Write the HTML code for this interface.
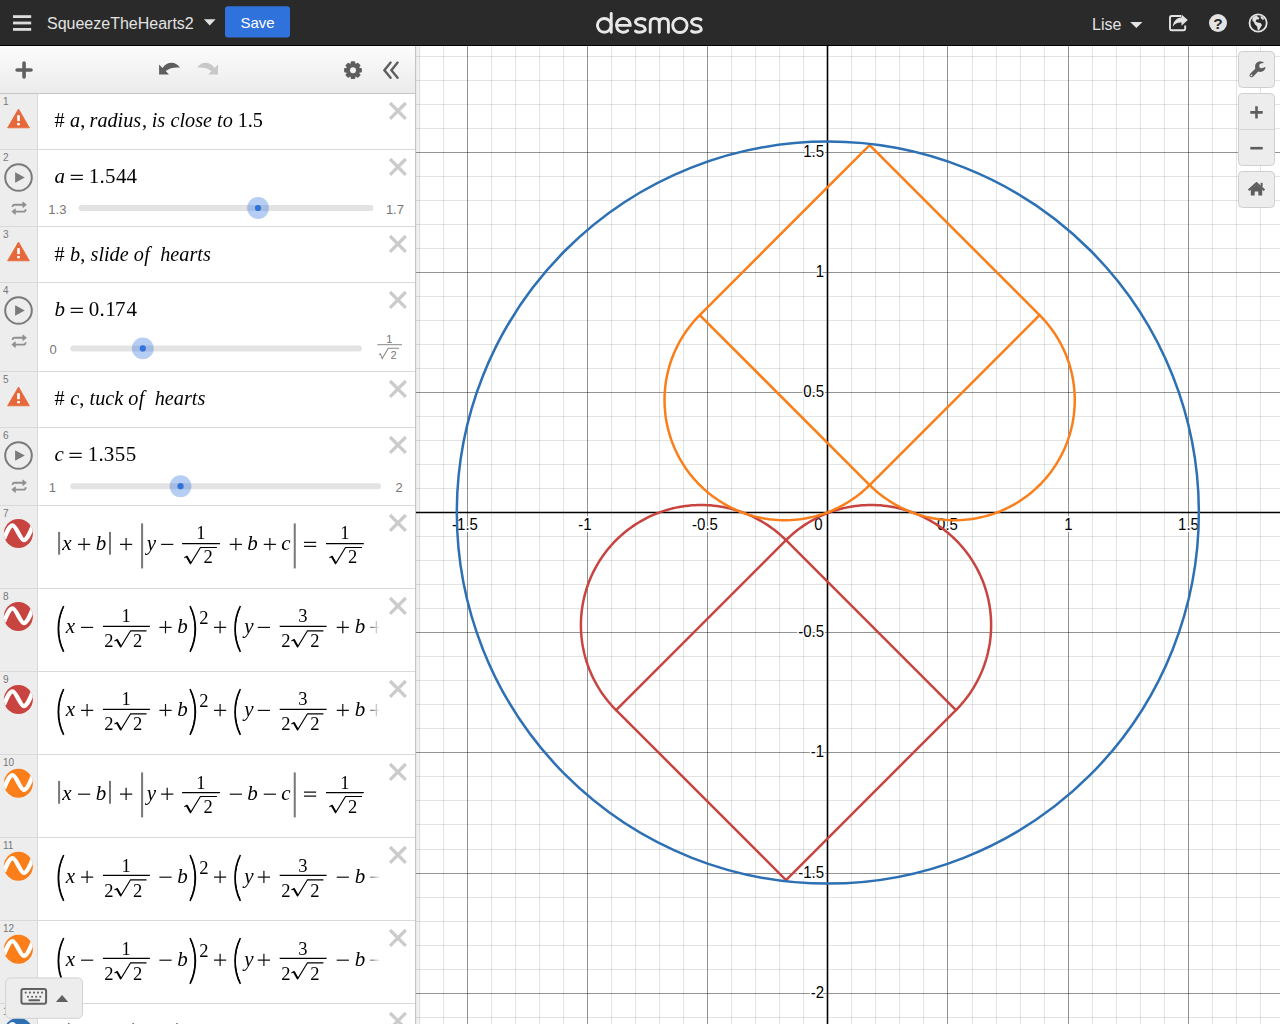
<!DOCTYPE html>
<html><head><meta charset="utf-8">
<style>
*{margin:0;padding:0}
html,body{width:1280px;height:1024px;overflow:hidden;background:#fff}
svg{position:absolute;display:block}

</style></head><body>
<svg style="position:absolute;left:416px;top:46px" width="864" height="978" viewBox="416 46 864 978">
<rect x="416" y="46" width="864" height="978" fill="#fff"/>
<defs><linearGradient id="shd2" x1="0" y1="0" x2="1" y2="0"><stop offset="0" stop-color="#000" stop-opacity="0.09"/><stop offset="1" stop-color="#000" stop-opacity="0"/></linearGradient></defs>
<path d="M419.5 46V1024M443.5 46V1024M491.5 46V1024M515.5 46V1024M539.5 46V1024M563.5 46V1024M611.5 46V1024M635.5 46V1024M659.5 46V1024M683.5 46V1024M731.5 46V1024M755.5 46V1024M779.5 46V1024M803.5 46V1024M851.5 46V1024M875.5 46V1024M899.5 46V1024M923.5 46V1024M972.5 46V1024M996.5 46V1024M1020.5 46V1024M1044.5 46V1024M1092.5 46V1024M1116.5 46V1024M1140.5 46V1024M1164.5 46V1024M1212.5 46V1024M1236.5 46V1024M1260.5 46V1024M416 56.5H1280M416 80.5H1280M416 104.5H1280M416 128.5H1280M416 176.5H1280M416 200.5H1280M416 224.5H1280M416 248.5H1280M416 296.5H1280M416 320.5H1280M416 344.5H1280M416 368.5H1280M416 416.5H1280M416 440.5H1280M416 464.5H1280M416 488.5H1280M416 536.5H1280M416 560.5H1280M416 584.5H1280M416 608.5H1280M416 656.5H1280M416 680.5H1280M416 704.5H1280M416 728.5H1280M416 776.5H1280M416 800.5H1280M416 824.5H1280M416 849.5H1280M416 897.5H1280M416 921.5H1280M416 945.5H1280M416 969.5H1280M416 1017.5H1280" stroke="#000" stroke-opacity="0.11" stroke-width="1" fill="none"/>
<path d="M467.5 46V1024M587.5 46V1024M707.5 46V1024M827.5 46V1024M947.5 46V1024M1068.5 46V1024M1188.5 46V1024M416 152.5H1280M416 272.5H1280M416 392.5H1280M416 512.5H1280M416 632.5H1280M416 752.5H1280M416 873.5H1280M416 993.5H1280" stroke="#000" stroke-opacity="0.42" stroke-width="1" fill="none"/>
<path d="M416 512.5H1280M827.5 46V1024" stroke="#000" stroke-width="1.6" fill="none"/>
<g font-family="Liberation Sans, sans-serif" font-size="15" fill="#000" stroke="#fff" stroke-width="3" paint-order="stroke" stroke-linejoin="round"><text transform="translate(467.5 529.8) scale(1 1.1)" text-anchor="middle">1.5</text><text transform="translate(457.073974609375 529.8) scale(1 1.1)" text-anchor="end">-</text><text transform="translate(587.5 529.8) scale(1 1.1)" text-anchor="middle">1</text><text transform="translate(583.328857421875 529.8) scale(1 1.1)" text-anchor="end">-</text><text transform="translate(707.5 529.8) scale(1 1.1)" text-anchor="middle">0.5</text><text transform="translate(697.073974609375 529.8) scale(1 1.1)" text-anchor="end">-</text><text transform="translate(947.5 529.8) scale(1 1.1)" text-anchor="middle">0.5</text><text transform="translate(1068.5 529.8) scale(1 1.1)" text-anchor="middle">1</text><text transform="translate(1188.5 529.8) scale(1 1.1)" text-anchor="middle">1.5</text><text transform="translate(824 156.9) scale(1 1.1)" text-anchor="end">1.5</text><text transform="translate(824 276.9) scale(1 1.1)" text-anchor="end">1</text><text transform="translate(824 396.9) scale(1 1.1)" text-anchor="end">0.5</text><text transform="translate(824 636.9) scale(1 1.1)" text-anchor="end">-0.5</text><text transform="translate(824 756.9) scale(1 1.1)" text-anchor="end">-1</text><text transform="translate(824 877.9) scale(1 1.1)" text-anchor="end">-1.5</text><text transform="translate(824 997.9) scale(1 1.1)" text-anchor="end">-2</text><text transform="translate(822.6 529.8) scale(1 1.1)" text-anchor="end">0</text></g>
<polyline points="786.02,540.18 955.94,710.10 786.02,880.02 616.10,710.10 786.02,540.18" stroke="#c74440" stroke-width="2.5" fill="none" stroke-linejoin="round" stroke-linecap="round"/>
<polyline points="955.94,710.10 958.13,707.85 960.27,705.54 962.34,703.17 964.35,700.75 966.30,698.28 968.18,695.76 970.00,693.20 971.74,690.58 973.42,687.92 975.03,685.22 976.57,682.47 978.03,679.69 979.42,676.87 980.74,674.01 981.98,671.12 983.15,668.20 984.24,665.25 985.25,662.27 986.18,659.27 987.03,656.24 987.81,653.19 988.50,650.12 989.11,647.04 989.65,643.94 990.10,640.82 990.47,637.70 990.76,634.57 990.96,631.43 991.09,628.29 991.13,625.14 991.09,622.00 990.96,618.85 990.76,615.72 990.47,612.58 990.10,609.46 989.65,606.35 989.11,603.25 988.50,600.16 987.81,597.09 987.03,594.04 986.18,591.02 985.25,588.01 984.24,585.04 983.15,582.08 981.98,579.16 980.74,576.27 979.42,573.42 978.03,570.60 976.57,567.81 975.03,565.07 973.42,562.36 971.74,559.70 970.00,557.09 968.18,554.52 966.30,552.00 964.35,549.53 962.34,547.11 960.27,544.75 958.13,542.44 955.94,540.18 953.68,537.99 951.37,535.85 949.01,533.78 946.59,531.77 944.12,529.82 941.60,527.94 939.03,526.12 936.42,524.38 933.75,522.70 931.05,521.09 928.31,519.55 925.52,518.09 922.70,516.70 919.85,515.38 916.96,514.14 914.03,512.97 911.08,511.88 908.11,510.87 905.10,509.94 902.07,509.09 899.03,508.31 895.96,507.62 892.87,507.00 889.77,506.47 886.66,506.02 883.54,505.65 880.40,505.36 877.26,505.16 874.12,505.03 870.98,504.99 867.83,505.03 864.69,505.16 861.55,505.36 858.42,505.65 855.29,506.02 852.18,506.47 849.08,507.00 846.00,507.62 842.93,508.31 839.88,509.09 836.85,509.94 833.85,510.87 830.87,511.88 827.92,512.97 825.00,514.14 822.11,515.38 819.25,516.70 816.43,518.09 813.65,519.55 810.90,521.09 808.20,522.70 805.54,524.38 802.92,526.12 800.35,527.94 797.83,529.82 795.36,531.77 792.95,533.78 790.58,535.85 788.27,537.99 786.02,540.18" stroke="#c74440" stroke-width="2.5" fill="none" stroke-linejoin="round" stroke-linecap="round"/>
<polyline points="786.02,540.18 783.76,537.99 781.45,535.85 779.09,533.78 776.67,531.77 774.20,529.82 771.68,527.94 769.11,526.12 766.50,524.38 763.84,522.70 761.13,521.09 758.39,519.55 755.61,518.09 752.78,516.70 749.93,515.38 747.04,514.14 744.12,512.97 741.17,511.88 738.19,510.87 735.18,509.94 732.16,509.09 729.11,508.31 726.04,507.62 722.95,507.00 719.85,506.47 716.74,506.02 713.62,505.65 710.49,505.36 707.35,505.16 704.20,505.03 701.06,504.99 697.91,505.03 694.77,505.16 691.63,505.36 688.50,505.65 685.38,506.02 682.26,506.47 679.16,507.00 676.08,507.62 673.01,508.31 669.96,509.09 666.93,509.94 663.93,510.87 660.95,511.88 658.00,512.97 655.08,514.14 652.19,515.38 649.33,516.70 646.51,518.09 643.73,519.55 640.98,521.09 638.28,522.70 635.62,524.38 633.01,526.12 630.44,527.94 627.92,529.82 625.45,531.77 623.03,533.78 620.66,535.85 618.35,537.99 616.10,540.18 613.91,542.44 611.77,544.75 609.70,547.11 607.68,549.53 605.74,552.00 603.86,554.52 602.04,557.09 600.29,559.70 598.61,562.36 597.01,565.07 595.47,567.81 594.00,570.60 592.61,573.42 591.30,576.27 590.05,579.16 588.89,582.08 587.80,585.04 586.79,588.01 585.86,591.02 585.00,594.04 584.23,597.09 583.53,600.16 582.92,603.25 582.39,606.35 581.94,609.46 581.57,612.58 581.28,615.72 581.07,618.85 580.95,622.00 580.91,625.14 580.95,628.29 581.07,631.43 581.28,634.57 581.57,637.70 581.94,640.82 582.39,643.94 582.92,647.04 583.53,650.12 584.23,653.19 585.00,656.24 585.86,659.27 586.79,662.27 587.80,665.25 588.89,668.20 590.05,671.12 591.30,674.01 592.61,676.87 594.00,679.69 595.47,682.47 597.01,685.22 598.61,687.92 600.29,690.58 602.04,693.20 603.86,695.76 605.74,698.28 607.68,700.75 609.70,703.17 611.77,705.54 613.91,707.85 616.10,710.10" stroke="#c74440" stroke-width="2.5" fill="none" stroke-linejoin="round" stroke-linecap="round"/>
<polyline points="869.64,145.18 1039.56,315.10 869.64,485.02 699.72,315.10 869.64,145.18" stroke="#fa7e19" stroke-width="2.5" fill="none" stroke-linejoin="round" stroke-linecap="round"/>
<polyline points="699.72,315.10 697.53,317.35 695.39,319.66 693.32,322.03 691.31,324.45 689.36,326.92 687.48,329.44 685.66,332.00 683.92,334.62 682.24,337.28 680.63,339.98 679.09,342.73 677.63,345.51 676.24,348.33 674.92,351.19 673.68,354.08 672.51,357.00 671.42,359.95 670.41,362.93 669.48,365.93 668.63,368.96 667.85,372.01 667.16,375.08 666.55,378.16 666.01,381.26 665.56,384.38 665.19,387.50 664.90,390.63 664.70,393.77 664.57,396.91 664.53,400.06 664.57,403.20 664.70,406.35 664.90,409.48 665.19,412.62 665.56,415.74 666.01,418.85 666.55,421.95 667.16,425.04 667.85,428.11 668.63,431.16 669.48,434.18 670.41,437.19 671.42,440.16 672.51,443.12 673.68,446.04 674.92,448.93 676.24,451.78 677.63,454.60 679.09,457.39 680.63,460.13 682.24,462.84 683.92,465.50 685.66,468.11 687.48,470.68 689.36,473.20 691.31,475.67 693.32,478.09 695.39,480.45 697.53,482.76 699.72,485.02 701.98,487.21 704.29,489.35 706.65,491.42 709.07,493.43 711.54,495.38 714.06,497.26 716.63,499.08 719.24,500.82 721.91,502.50 724.61,504.11 727.35,505.65 730.14,507.11 732.96,508.50 735.81,509.82 738.70,511.06 741.63,512.23 744.58,513.32 747.55,514.33 750.56,515.26 753.59,516.11 756.63,516.89 759.70,517.58 762.79,518.20 765.89,518.73 769.00,519.18 772.12,519.55 775.26,519.84 778.40,520.04 781.54,520.17 784.68,520.21 787.83,520.17 790.97,520.04 794.11,519.84 797.24,519.55 800.37,519.18 803.48,518.73 806.58,518.20 809.66,517.58 812.73,516.89 815.78,516.11 818.81,515.26 821.81,514.33 824.79,513.32 827.74,512.23 830.66,511.06 833.55,509.82 836.41,508.50 839.23,507.11 842.01,505.65 844.76,504.11 847.46,502.50 850.12,500.82 852.74,499.08 855.31,497.26 857.83,495.38 860.30,493.43 862.71,491.42 865.08,489.35 867.39,487.21 869.64,485.02" stroke="#fa7e19" stroke-width="2.5" fill="none" stroke-linejoin="round" stroke-linecap="round"/>
<polyline points="869.64,485.02 871.90,487.21 874.21,489.35 876.57,491.42 878.99,493.43 881.46,495.38 883.98,497.26 886.55,499.08 889.16,500.82 891.82,502.50 894.53,504.11 897.27,505.65 900.05,507.11 902.88,508.50 905.73,509.82 908.62,511.06 911.54,512.23 914.49,513.32 917.47,514.33 920.48,515.26 923.50,516.11 926.55,516.89 929.62,517.58 932.71,518.20 935.81,518.73 938.92,519.18 942.04,519.55 945.17,519.84 948.31,520.04 951.46,520.17 954.60,520.21 957.75,520.17 960.89,520.04 964.03,519.84 967.16,519.55 970.28,519.18 973.40,518.73 976.50,518.20 979.58,517.58 982.65,516.89 985.70,516.11 988.73,515.26 991.73,514.33 994.71,513.32 997.66,512.23 1000.58,511.06 1003.47,509.82 1006.33,508.50 1009.15,507.11 1011.93,505.65 1014.68,504.11 1017.38,502.50 1020.04,500.82 1022.65,499.08 1025.22,497.26 1027.74,495.38 1030.21,493.43 1032.63,491.42 1035.00,489.35 1037.31,487.21 1039.56,485.02 1041.75,482.76 1043.89,480.45 1045.96,478.09 1047.98,475.67 1049.92,473.20 1051.80,470.68 1053.62,468.11 1055.37,465.50 1057.05,462.84 1058.65,460.13 1060.19,457.39 1061.66,454.60 1063.05,451.78 1064.36,448.93 1065.61,446.04 1066.77,443.12 1067.86,440.16 1068.87,437.19 1069.80,434.18 1070.66,431.16 1071.43,428.11 1072.13,425.04 1072.74,421.95 1073.27,418.85 1073.72,415.74 1074.09,412.62 1074.38,409.48 1074.59,406.35 1074.71,403.20 1074.75,400.06 1074.71,396.91 1074.59,393.77 1074.38,390.63 1074.09,387.50 1073.72,384.38 1073.27,381.26 1072.74,378.16 1072.13,375.08 1071.43,372.01 1070.66,368.96 1069.80,365.93 1068.87,362.93 1067.86,359.95 1066.77,357.00 1065.61,354.08 1064.36,351.19 1063.05,348.33 1061.66,345.51 1060.19,342.73 1058.65,339.98 1057.05,337.28 1055.37,334.62 1053.62,332.00 1051.80,329.44 1049.92,326.92 1047.98,324.45 1045.96,322.03 1043.89,319.66 1041.75,317.35 1039.56,315.10" stroke="#fa7e19" stroke-width="2.5" fill="none" stroke-linejoin="round" stroke-linecap="round"/>
<circle cx="827.83" cy="512.6" r="371.02" stroke="#2d70b3" stroke-width="2.5" fill="none"/>
<rect x="1238.5" y="51.5" width="36" height="36" rx="4" fill="#ededed" stroke="#cfcfcf" stroke-width="1"/>
<rect x="1238.5" y="93.5" width="36" height="72" rx="4" fill="#ededed" stroke="#cfcfcf" stroke-width="1"/>
<rect x="1239" y="129" width="35" height="1" fill="#d5d5d5"/>
<rect x="1238.5" y="171.5" width="36" height="36" rx="4" fill="#ededed" stroke="#cfcfcf" stroke-width="1"/>
<path d="M1251.6 75.2L1258.2 68.6" stroke="#5e5e5e" stroke-width="4.1" stroke-linecap="round"/>
<circle cx="1260.3" cy="66.6" r="5.3" fill="#5e5e5e"/>
<circle cx="1261.5" cy="65.9" r="2.3" fill="#ededed"/>
<path d="M1261.5 65.9L1267.2 64.2" stroke="#ededed" stroke-width="4.4"/>
<circle cx="1251.5" cy="75.3" r="0.9" fill="#ededed"/>
<path d="M1256.5 106.2V118.6M1250.3 112.4H1262.7" stroke="#5e5e5e" stroke-width="2.6"/>
<path d="M1250.3 148.2H1262.7" stroke="#5e5e5e" stroke-width="2.6"/>
<path d="M1248.6 190.3L1256.5 183.2L1264.4 190.3" stroke="#5e5e5e" stroke-width="2.2" fill="none"/>
<path d="M1250.8 189.5L1256.5 184.6L1262.2 189.5V195.4H1258.3V191.4H1254.7V195.4H1250.8Z" fill="#5e5e5e"/>
<rect x="1260.6" y="182.8" width="2" height="4" fill="#5e5e5e"/>
<rect x="416" y="46" width="5" height="978" fill="url(#shd2)"/>
</svg>
<svg style="left:0;top:0" width="416" height="1024" viewBox="0 0 416 1024">
<defs><linearGradient id="tbg" x1="0" y1="0" x2="0" y2="1"><stop offset="0" stop-color="#fcfcfc"/><stop offset="1" stop-color="#ebebeb"/></linearGradient><linearGradient id="shd" x1="0" y1="0" x2="1" y2="0"><stop offset="0" stop-color="#000" stop-opacity="0.10"/><stop offset="1" stop-color="#000" stop-opacity="0"/></linearGradient></defs>
<rect x="0" y="46" width="415" height="978" fill="#fff"/>
<rect x="0" y="46" width="415" height="47" fill="url(#tbg)"/>
<rect x="0" y="93" width="415" height="1" fill="#c6c6c6"/>
<rect x="0" y="94" width="37" height="930" fill="#ededed"/>
<rect x="37" y="94" width="1" height="930" fill="#d9d9d9"/>
<rect x="0" y="149" width="415" height="1" fill="#d9d9d9"/>
<rect x="0" y="226" width="415" height="1" fill="#d9d9d9"/>
<rect x="0" y="282" width="415" height="1" fill="#d9d9d9"/>
<rect x="0" y="371" width="415" height="1" fill="#d9d9d9"/>
<rect x="0" y="427" width="415" height="1" fill="#d9d9d9"/>
<rect x="0" y="505" width="415" height="1" fill="#d9d9d9"/>
<rect x="0" y="588" width="415" height="1" fill="#d9d9d9"/>
<rect x="0" y="671" width="415" height="1" fill="#d9d9d9"/>
<rect x="0" y="754" width="415" height="1" fill="#d9d9d9"/>
<rect x="0" y="837" width="415" height="1" fill="#d9d9d9"/>
<rect x="0" y="920" width="415" height="1" fill="#d9d9d9"/>
<rect x="0" y="1003" width="415" height="1" fill="#d9d9d9"/>
<rect x="415" y="46" width="1" height="978" fill="#c4c4c4"/>
<path d="M24.05 63.05V76.95M17.1 70H31.0" stroke="#606060" stroke-width="3.6" stroke-linecap="round"/>
<path d="M159.1 64.6V74.5H168.9L165.7 71.1C169.6 67.8 175 67.1 179.9 67.7C176 61.8 167.8 60.6 162.5 67.9Z" fill="#5e5e5e"/>
<path d="M218.0 64.6V74.5H208.2L211.4 71.1C207.5 67.8 202.1 67.1 197.2 67.7C201.1 61.8 209.3 60.6 214.6 67.9Z" fill="#c8c8c8"/>
<path d="M359.02 68.73 L360.98 68.83 L360.98 71.57 L359.02 71.67 L358.30 73.42 L359.61 74.88 L357.68 76.81 L356.22 75.50 L354.47 76.22 L354.37 78.18 L351.63 78.18 L351.53 76.22 L349.78 75.50 L348.32 76.81 L346.39 74.88 L347.70 73.42 L346.98 71.67 L345.02 71.57 L345.02 68.83 L346.98 68.73 L347.70 66.98 L346.39 65.52 L348.32 63.59 L349.78 64.90 L351.53 64.18 L351.63 62.22 L354.37 62.22 L354.47 64.18 L356.22 64.90 L357.68 63.59 L359.61 65.52 L358.30 66.98Z" fill="#5e5e5e" stroke="#5e5e5e" stroke-width="1.8" stroke-linejoin="round"/>
<circle cx="353" cy="70.2" r="6.6" fill="#5e5e5e"/>
<circle cx="353" cy="70.2" r="3.0" fill="#f3f3f3"/>
<path d="M390.6 62.6L384.4 70.2L390.6 77.8M397.6 62.6L391.4 70.2L397.6 77.8" stroke="#5e5e5e" stroke-width="2.4" fill="none" stroke-linecap="round" stroke-linejoin="miter"/>
<text x="3" y="104.6" font-family="Liberation Sans" font-size="10" fill="#777">1</text>
<path d="M390 103.0L405.8 118.8M405.8 103.0L390 118.8" stroke="#cbcbcb" stroke-width="3.2"/>
<text x="3" y="160.6" font-family="Liberation Sans" font-size="10" fill="#777">2</text>
<path d="M390 159.0L405.8 174.8M405.8 159.0L390 174.8" stroke="#cbcbcb" stroke-width="3.2"/>
<text x="3" y="237.6" font-family="Liberation Sans" font-size="10" fill="#777">3</text>
<path d="M390 236.0L405.8 251.8M405.8 236.0L390 251.8" stroke="#cbcbcb" stroke-width="3.2"/>
<text x="3" y="293.6" font-family="Liberation Sans" font-size="10" fill="#777">4</text>
<path d="M390 292.0L405.8 307.8M405.8 292.0L390 307.8" stroke="#cbcbcb" stroke-width="3.2"/>
<text x="3" y="382.6" font-family="Liberation Sans" font-size="10" fill="#777">5</text>
<path d="M390 381.0L405.8 396.8M405.8 381.0L390 396.8" stroke="#cbcbcb" stroke-width="3.2"/>
<text x="3" y="438.6" font-family="Liberation Sans" font-size="10" fill="#777">6</text>
<path d="M390 437.0L405.8 452.8M405.8 437.0L390 452.8" stroke="#cbcbcb" stroke-width="3.2"/>
<text x="3" y="516.6" font-family="Liberation Sans" font-size="10" fill="#777">7</text>
<path d="M390 515.0L405.8 530.8M405.8 515.0L390 530.8" stroke="#cbcbcb" stroke-width="3.2"/>
<text x="3" y="599.6" font-family="Liberation Sans" font-size="10" fill="#777">8</text>
<path d="M390 598.0L405.8 613.8M405.8 598.0L390 613.8" stroke="#cbcbcb" stroke-width="3.2"/>
<text x="3" y="682.6" font-family="Liberation Sans" font-size="10" fill="#777">9</text>
<path d="M390 681.0L405.8 696.8M405.8 681.0L390 696.8" stroke="#cbcbcb" stroke-width="3.2"/>
<text x="3" y="765.6" font-family="Liberation Sans" font-size="10" fill="#777">10</text>
<path d="M390 764.0L405.8 779.8M405.8 764.0L390 779.8" stroke="#cbcbcb" stroke-width="3.2"/>
<text x="3" y="848.6" font-family="Liberation Sans" font-size="10" fill="#777">11</text>
<path d="M390 847.0L405.8 862.8M405.8 847.0L390 862.8" stroke="#cbcbcb" stroke-width="3.2"/>
<text x="3" y="931.6" font-family="Liberation Sans" font-size="10" fill="#777">12</text>
<path d="M390 930.0L405.8 945.8M405.8 930.0L390 945.8" stroke="#cbcbcb" stroke-width="3.2"/>
<text x="3" y="1014.6" font-family="Liberation Sans" font-size="10" fill="#777">13</text>
<path d="M390 1013.0L405.8 1028.8M405.8 1013.0L390 1028.8" stroke="#cbcbcb" stroke-width="3.2"/>
<path d="M18.5 109.00L29.4 127.80H7.6Z" fill="#e6683a" stroke="#e6683a" stroke-width="0.8" stroke-linejoin="round"/>
<rect x="17.2" y="115.20" width="2.6" height="6.0" fill="#fff"/>
<rect x="17.2" y="123.00" width="2.6" height="2.3" fill="#fff"/>
<path d="M18.5 242.00L29.4 260.80H7.6Z" fill="#e6683a" stroke="#e6683a" stroke-width="0.8" stroke-linejoin="round"/>
<rect x="17.2" y="248.20" width="2.6" height="6.0" fill="#fff"/>
<rect x="17.2" y="256.00" width="2.6" height="2.3" fill="#fff"/>
<path d="M18.5 387.00L29.4 405.80H7.6Z" fill="#e6683a" stroke="#e6683a" stroke-width="0.8" stroke-linejoin="round"/>
<rect x="17.2" y="393.20" width="2.6" height="6.0" fill="#fff"/>
<rect x="17.2" y="401.00" width="2.6" height="2.3" fill="#fff"/>
<circle cx="18.5" cy="177.5" r="13.3" fill="none" stroke="#7a7a7a" stroke-width="2"/>
<path d="M15.1 172.3L24.8 177.5L15.1 182.7Z" fill="#7a7a7a"/>
<path d="M12.6 207.1C12.6 204.9 13.2 204.7 15 204.7H23.6" stroke="#8f8f8f" stroke-width="1.9" fill="none"/>
<path d="M22.9 201.9L26.4 204.7L22.9 207.5Z" fill="#8f8f8f" stroke="#8f8f8f" stroke-width="0.8" stroke-linejoin="round"/>
<path d="M25.6 209.2C25.6 211.4 25 211.6 23.2 211.6H14.6" stroke="#8f8f8f" stroke-width="1.9" fill="none"/>
<path d="M15.3 208.8L11.8 211.6L15.3 214.4Z" fill="#8f8f8f" stroke="#8f8f8f" stroke-width="0.8" stroke-linejoin="round"/>
<circle cx="18.5" cy="310.5" r="13.3" fill="none" stroke="#7a7a7a" stroke-width="2"/>
<path d="M15.1 305.3L24.8 310.5L15.1 315.7Z" fill="#7a7a7a"/>
<path d="M12.6 340.1C12.6 337.9 13.2 337.7 15 337.7H23.6" stroke="#8f8f8f" stroke-width="1.9" fill="none"/>
<path d="M22.9 334.9L26.4 337.7L22.9 340.5Z" fill="#8f8f8f" stroke="#8f8f8f" stroke-width="0.8" stroke-linejoin="round"/>
<path d="M25.6 342.2C25.6 344.4 25 344.6 23.2 344.6H14.6" stroke="#8f8f8f" stroke-width="1.9" fill="none"/>
<path d="M15.3 341.8L11.8 344.6L15.3 347.4Z" fill="#8f8f8f" stroke="#8f8f8f" stroke-width="0.8" stroke-linejoin="round"/>
<circle cx="18.5" cy="455.5" r="13.3" fill="none" stroke="#7a7a7a" stroke-width="2"/>
<path d="M15.1 450.3L24.8 455.5L15.1 460.7Z" fill="#7a7a7a"/>
<path d="M12.6 485.1C12.6 482.9 13.2 482.7 15 482.7H23.6" stroke="#8f8f8f" stroke-width="1.9" fill="none"/>
<path d="M22.9 479.9L26.4 482.7L22.9 485.5Z" fill="#8f8f8f" stroke="#8f8f8f" stroke-width="0.8" stroke-linejoin="round"/>
<path d="M25.6 487.2C25.6 489.4 25 489.6 23.2 489.6H14.6" stroke="#8f8f8f" stroke-width="1.9" fill="none"/>
<path d="M15.3 486.8L11.8 489.6L15.3 492.4Z" fill="#8f8f8f" stroke="#8f8f8f" stroke-width="0.8" stroke-linejoin="round"/>
<circle cx="18.4" cy="533.4" r="14.5" fill="#c74440"/>
<clipPath id="wc505"><circle cx="18.4" cy="533.4" r="14.5"/></clipPath>
<path d="M4.0 538.6C7.2 530.9 9.6 525.3 12.7 525.3C15.9 525.3 20.6 540.1 23.8 540.1C26.6 540.1 29.4 534.4 33.2 524.9" stroke="#fff" stroke-width="4.3" fill="none" stroke-linejoin="round" clip-path="url(#wc505)"/>
<circle cx="18.4" cy="616.4" r="14.5" fill="#c74440"/>
<clipPath id="wc588"><circle cx="18.4" cy="616.4" r="14.5"/></clipPath>
<path d="M4.0 621.6C7.2 613.9 9.6 608.3 12.7 608.3C15.9 608.3 20.6 623.1 23.8 623.1C26.6 623.1 29.4 617.4 33.2 607.9" stroke="#fff" stroke-width="4.3" fill="none" stroke-linejoin="round" clip-path="url(#wc588)"/>
<circle cx="18.4" cy="699.4" r="14.5" fill="#c74440"/>
<clipPath id="wc671"><circle cx="18.4" cy="699.4" r="14.5"/></clipPath>
<path d="M4.0 704.6C7.2 696.9 9.6 691.3 12.7 691.3C15.9 691.3 20.6 706.1 23.8 706.1C26.6 706.1 29.4 700.4 33.2 690.9" stroke="#fff" stroke-width="4.3" fill="none" stroke-linejoin="round" clip-path="url(#wc671)"/>
<circle cx="18.4" cy="783.2" r="14.5" fill="#fa7e19"/>
<clipPath id="wc754"><circle cx="18.4" cy="783.2" r="14.5"/></clipPath>
<path d="M4.0 788.4000000000001C7.2 780.7 9.6 775.1 12.7 775.1C15.9 775.1 20.6 789.9000000000001 23.8 789.9000000000001C26.6 789.9000000000001 29.4 784.2 33.2 774.7" stroke="#fff" stroke-width="4.3" fill="none" stroke-linejoin="round" clip-path="url(#wc754)"/>
<circle cx="18.4" cy="866.2" r="14.5" fill="#fa7e19"/>
<clipPath id="wc837"><circle cx="18.4" cy="866.2" r="14.5"/></clipPath>
<path d="M4.0 871.4000000000001C7.2 863.7 9.6 858.1 12.7 858.1C15.9 858.1 20.6 872.9000000000001 23.8 872.9000000000001C26.6 872.9000000000001 29.4 867.2 33.2 857.7" stroke="#fff" stroke-width="4.3" fill="none" stroke-linejoin="round" clip-path="url(#wc837)"/>
<circle cx="18.4" cy="949.2" r="14.5" fill="#fa7e19"/>
<clipPath id="wc920"><circle cx="18.4" cy="949.2" r="14.5"/></clipPath>
<path d="M4.0 954.4000000000001C7.2 946.7 9.6 941.1 12.7 941.1C15.9 941.1 20.6 955.9000000000001 23.8 955.9000000000001C26.6 955.9000000000001 29.4 950.2 33.2 940.7" stroke="#fff" stroke-width="4.3" fill="none" stroke-linejoin="round" clip-path="url(#wc920)"/>
<circle cx="18.4" cy="1032.2" r="14.5" fill="#2d70b3"/>
<clipPath id="wc1003"><circle cx="18.4" cy="1032.2" r="14.5"/></clipPath>
<path d="M4.0 1037.4C7.2 1029.7 9.6 1024.1000000000001 12.7 1024.1000000000001C15.9 1024.1000000000001 20.6 1038.9 23.8 1038.9C26.6 1038.9 29.4 1033.2 33.2 1023.7" stroke="#fff" stroke-width="4.3" fill="none" stroke-linejoin="round" clip-path="url(#wc1003)"/>
<path d="M81.5 208H370.5" stroke="#e3e3e3" stroke-width="6" stroke-linecap="round"/>
<circle cx="258" cy="208" r="10.9" fill="#2f72dc" fill-opacity="0.35"/>
<circle cx="258" cy="208" r="3.1" fill="#2f72dc"/>
<path d="M73.3 348.4H359.0" stroke="#e3e3e3" stroke-width="6" stroke-linecap="round"/>
<circle cx="142.8" cy="348.4" r="10.9" fill="#2f72dc" fill-opacity="0.35"/>
<circle cx="142.8" cy="348.4" r="3.1" fill="#2f72dc"/>
<path d="M73.3 486.2H378.0" stroke="#e3e3e3" stroke-width="6" stroke-linecap="round"/>
<circle cx="180.5" cy="486.2" r="10.9" fill="#2f72dc" fill-opacity="0.35"/>
<circle cx="180.5" cy="486.2" r="3.1" fill="#2f72dc"/>
<text x="48.3" y="213.8" font-family="Liberation Sans" font-size="13" fill="#777">1.3</text>
<text x="385.9" y="213.8" font-family="Liberation Sans" font-size="13" fill="#777">1.7</text>
<text x="49.5" y="353.7" font-family="Liberation Sans" font-size="13" fill="#777">0</text>
<text x="48.8" y="492.4" font-family="Liberation Sans" font-size="13" fill="#777">1</text>
<text x="395.6" y="492.4" font-family="Liberation Sans" font-size="13" fill="#777">2</text>
<text x="386.3" y="342.9" font-family="Liberation Sans" font-size="11" fill="#777">1</text>
<path d="M377.4 344.7H402" stroke="#888" stroke-width="1"/>
<path d="M379 354.4L380.4 353.9L382.2 358.6L388.3 348.3H399" stroke="#888" stroke-width="1.1" fill="none"/>
<text x="390.4" y="358.8" font-family="Liberation Sans" font-size="11" fill="#777">2</text>
<defs><linearGradient id="fadeg" x1="0" y1="0" x2="1" y2="0"><stop offset="0" stop-color="#fff" stop-opacity="1"/><stop offset="1" stop-color="#fff" stop-opacity="0"/></linearGradient>
<mask id="mfade" maskUnits="userSpaceOnUse" x="0" y="0" width="416" height="1024"><rect x="0" y="0" width="365" height="1024" fill="#fff"/><rect x="365" y="0" width="15" height="1024" fill="url(#fadeg)"/></mask></defs>
<g mask="url(#mfade)" font-family="Liberation Serif">
<text x="54.44" y="127.30" font-size="20.2">#</text>
<text x="70.00" y="127.30" font-size="20.2" font-style="italic">a</text>
<text x="80.23" y="127.30" font-size="20.2">,</text>
<text x="89.58" y="127.30" font-size="20.2" font-style="italic">radius</text>
<text x="142.03" y="127.30" font-size="20.2">,</text>
<text x="151.68" y="127.30" font-size="20.2" font-style="italic">is</text>
<text x="170.48" y="127.30" font-size="20.2" font-style="italic">close</text>
<text x="217.11" y="127.30" font-size="20.2" font-style="italic">to</text>
<text x="237.72" y="127.30" font-size="20.2">1.5</text>
<text x="54.54" y="260.70" font-size="20.2">#</text>
<text x="70.05" y="260.70" font-size="20.2" font-style="italic">b</text>
<text x="80.23" y="260.70" font-size="20.2">,</text>
<text x="90.55" y="260.70" font-size="20.2" font-style="italic">slide</text>
<text x="133.80" y="260.70" font-size="20.2" font-style="italic">o</text>
<text x="144.27" y="260.70" font-size="20.2" font-style="italic">f</text>
<text x="160.27" y="260.70" font-size="20.2" font-style="italic">hearts</text>
<text x="54.54" y="404.60" font-size="20.2">#</text>
<text x="70.18" y="404.60" font-size="20.2" font-style="italic">c</text>
<text x="79.23" y="404.60" font-size="20.2">,</text>
<text x="89.61" y="404.60" font-size="20.2" font-style="italic">tuck</text>
<text x="128.20" y="404.60" font-size="20.2" font-style="italic">o</text>
<text x="138.77" y="404.60" font-size="20.2" font-style="italic">f</text>
<text x="154.77" y="404.60" font-size="20.2" font-style="italic">hearts</text>
<text x="54.47" y="183.00" font-size="21.0" font-style="italic" fill="#000">a</text>
<path d="M70.70 175.40H82.90M70.70 179.30H82.90" stroke="#111" stroke-width="1.2" fill="none"/>
<text x="88.75" y="183.00" font-size="21.0" fill="#000">1</text>
<text x="99.42" y="183.00" font-size="21.0" fill="#000">.</text>
<text x="105.03" y="183.00" font-size="21.0" fill="#000">5</text>
<text x="115.99" y="183.00" font-size="21.0" fill="#000">4</text>
<text x="126.59" y="183.00" font-size="21.0" fill="#000">4</text>
<text x="54.52" y="316.00" font-size="21.0" font-style="italic" fill="#000">b</text>
<path d="M70.70 308.40H82.90M70.70 312.30H82.90" stroke="#111" stroke-width="1.2" fill="none"/>
<text x="88.70" y="316.00" font-size="21.0" fill="#000">0</text>
<text x="99.42" y="316.00" font-size="21.0" fill="#000">.</text>
<text x="105.15" y="316.00" font-size="21.0" fill="#000">1</text>
<text x="115.02" y="316.00" font-size="21.0" fill="#000">7</text>
<text x="126.59" y="316.00" font-size="21.0" fill="#000">4</text>
<text x="54.45" y="461.00" font-size="21.0" font-style="italic" fill="#000">c</text>
<path d="M69.50 453.40H81.70M69.50 457.30H81.70" stroke="#111" stroke-width="1.2" fill="none"/>
<text x="87.65" y="461.00" font-size="21.0" fill="#000">1</text>
<text x="98.62" y="461.00" font-size="21.0" fill="#000">.</text>
<text x="103.70" y="461.00" font-size="21.0" fill="#000">3</text>
<text x="114.78" y="461.00" font-size="21.0" fill="#000">5</text>
<text x="125.78" y="461.00" font-size="21.0" fill="#000">5</text>
<rect x="58.10" y="531.90" width="2" height="22.80" fill="#777"/>
<text x="62.36" y="550.00" font-size="21.0" font-style="italic" fill="#000">x</text>
<path d="M78.00 544.40H90.20M84.10 538.00V550.20" stroke="#111" stroke-width="1.2" fill="none"/>
<text x="95.72" y="550.00" font-size="21.0" font-style="italic" fill="#000">b</text>
<rect x="109.00" y="531.90" width="2" height="22.80" fill="#777"/>
<path d="M120.00 544.40H132.20M126.10 538.00V550.20" stroke="#111" stroke-width="1.2" fill="none"/>
<rect x="141.10" y="523.40" width="2" height="45.00" fill="#777"/>
<text x="146.75" y="550.00" font-size="21.0" font-style="italic" fill="#000">y</text>
<path d="M161.10 544.40H173.30" stroke="#111" stroke-width="1.2" fill="none"/>
<path d="M182.10 543.50L219.90 543.50" stroke="#000" stroke-width="1.25"/>
<text x="196.37" y="538.80" font-size="18.5" fill="#000">1</text>
<path d="M184.30 557.70L186.90 556.30L190.60 563.50L200.40 547.50L216.90 547.50" stroke="#000" stroke-width="1.15" fill="none" stroke-linejoin="miter"/>
<path d="M186.70 556.50L190.60 563.30" stroke="#000" stroke-width="2" fill="none"/>
<text x="203.49" y="563.00" font-size="18.5" fill="#000">2</text>
<path d="M229.75 544.40H241.95M235.85 538.00V550.20" stroke="#111" stroke-width="1.2" fill="none"/>
<text x="247.22" y="550.00" font-size="21.0" font-style="italic" fill="#000">b</text>
<path d="M263.75 544.40H275.95M269.85 538.00V550.20" stroke="#111" stroke-width="1.2" fill="none"/>
<text x="281.35" y="550.00" font-size="21.0" font-style="italic" fill="#000">c</text>
<rect x="293.75" y="523.40" width="2" height="45.00" fill="#777"/>
<path d="M304.00 542.40H316.20M304.00 546.30H316.20" stroke="#111" stroke-width="1.2" fill="none"/>
<path d="M326.00 543.50L363.75 543.50" stroke="#000" stroke-width="1.25"/>
<text x="340.27" y="538.80" font-size="18.5" fill="#000">1</text>
<path d="M329.40 557.70L332.00 556.30L335.70 563.50L345.50 547.50L362.00 547.50" stroke="#000" stroke-width="1.15" fill="none" stroke-linejoin="miter"/>
<path d="M331.80 556.50L335.70 563.30" stroke="#000" stroke-width="2" fill="none"/>
<text x="347.94" y="563.00" font-size="18.5" fill="#000">2</text>
<rect x="58.10" y="780.90" width="2" height="22.80" fill="#777"/>
<text x="62.36" y="799.80" font-size="21.0" font-style="italic" fill="#000">x</text>
<path d="M78.00 794.20H90.20" stroke="#111" stroke-width="1.2" fill="none"/>
<text x="95.72" y="799.80" font-size="21.0" font-style="italic" fill="#000">b</text>
<rect x="109.00" y="780.90" width="2" height="22.80" fill="#777"/>
<path d="M120.00 794.20H132.20M126.10 787.80V800.00" stroke="#111" stroke-width="1.2" fill="none"/>
<rect x="141.10" y="772.40" width="2" height="45.00" fill="#777"/>
<text x="146.75" y="799.80" font-size="21.0" font-style="italic" fill="#000">y</text>
<path d="M161.10 794.20H173.30M167.20 787.80V800.00" stroke="#111" stroke-width="1.2" fill="none"/>
<path d="M182.10 792.50L219.90 792.50" stroke="#000" stroke-width="1.25"/>
<text x="196.37" y="788.60" font-size="18.5" fill="#000">1</text>
<path d="M184.30 806.70L186.90 805.30L190.60 812.50L200.40 796.50L216.90 796.50" stroke="#000" stroke-width="1.15" fill="none" stroke-linejoin="miter"/>
<path d="M186.70 805.50L190.60 812.30" stroke="#000" stroke-width="2" fill="none"/>
<text x="203.49" y="812.80" font-size="18.5" fill="#000">2</text>
<path d="M229.75 794.20H241.95" stroke="#111" stroke-width="1.2" fill="none"/>
<text x="247.22" y="799.80" font-size="21.0" font-style="italic" fill="#000">b</text>
<path d="M263.75 794.20H275.95" stroke="#111" stroke-width="1.2" fill="none"/>
<text x="281.35" y="799.80" font-size="21.0" font-style="italic" fill="#000">c</text>
<rect x="293.75" y="772.40" width="2" height="45.00" fill="#777"/>
<path d="M304.00 792.20H316.20M304.00 796.10H316.20" stroke="#111" stroke-width="1.2" fill="none"/>
<path d="M326.00 792.50L363.75 792.50" stroke="#000" stroke-width="1.25"/>
<text x="340.27" y="788.60" font-size="18.5" fill="#000">1</text>
<path d="M329.40 806.70L332.00 805.30L335.70 812.50L345.50 796.50L362.00 796.50" stroke="#000" stroke-width="1.15" fill="none" stroke-linejoin="miter"/>
<path d="M331.80 805.50L335.70 812.30" stroke="#000" stroke-width="2" fill="none"/>
<text x="347.94" y="812.80" font-size="18.5" fill="#000">2</text>
<path d="M63.70 606.00C56.50 619.74 56.50 638.06 63.70 651.80" stroke="#000" stroke-width="1.6" fill="none"/>
<path d="M63.10 608.00C57.30 620.66 57.30 637.14 63.10 649.80" stroke="#000" stroke-width="1.0" fill="none"/>
<text x="65.76" y="633.00" font-size="21.0" font-style="italic" fill="#000">x</text>
<path d="M81.00 627.40H93.20" stroke="#111" stroke-width="1.2" fill="none"/>
<path d="M102.95 626.30L149.90 626.30" stroke="#000" stroke-width="1.25"/>
<text x="121.47" y="622.00" font-size="18.5" fill="#000">1</text>
<text x="104.29" y="647.00" font-size="18.5" fill="#000">2</text>
<path d="M114.50 641.00L117.10 639.60L120.80 646.80L130.60 630.80L146.50 630.80" stroke="#000" stroke-width="1.15" fill="none" stroke-linejoin="miter"/>
<path d="M116.90 639.80L120.80 646.60" stroke="#000" stroke-width="2" fill="none"/>
<text x="132.99" y="647.00" font-size="18.5" fill="#000">2</text>
<path d="M159.40 627.40H171.60M165.50 621.00V633.20" stroke="#111" stroke-width="1.2" fill="none"/>
<text x="177.22" y="633.00" font-size="21.0" font-style="italic" fill="#000">b</text>
<path d="M190.00 606.00C197.20 619.74 197.20 638.06 190.00 651.80" stroke="#000" stroke-width="1.6" fill="none"/>
<path d="M190.60 608.00C196.40 620.66 196.40 637.14 190.60 649.80" stroke="#000" stroke-width="1.0" fill="none"/>
<text x="199.19" y="624.40" font-size="18.5" fill="#000">2</text>
<path d="M214.00 627.40H226.20M220.10 621.00V633.20" stroke="#111" stroke-width="1.2" fill="none"/>
<path d="M240.40 606.00C233.20 619.74 233.20 638.06 240.40 651.80" stroke="#000" stroke-width="1.6" fill="none"/>
<path d="M239.80 608.00C234.00 620.66 234.00 637.14 239.80 649.80" stroke="#000" stroke-width="1.0" fill="none"/>
<text x="244.35" y="633.00" font-size="21.0" font-style="italic" fill="#000">y</text>
<path d="M257.80 627.40H270.00" stroke="#111" stroke-width="1.2" fill="none"/>
<path d="M279.70 626.30L326.60 626.30" stroke="#000" stroke-width="1.25"/>
<text x="298.31" y="622.00" font-size="18.5" fill="#000">3</text>
<text x="281.19" y="647.00" font-size="18.5" fill="#000">2</text>
<path d="M291.40 641.00L294.00 639.60L297.70 646.80L307.50 630.80L323.40 630.80" stroke="#000" stroke-width="1.15" fill="none" stroke-linejoin="miter"/>
<path d="M293.80 639.80L297.70 646.60" stroke="#000" stroke-width="2" fill="none"/>
<text x="310.19" y="647.00" font-size="18.5" fill="#000">2</text>
<path d="M336.70 627.40H348.90M342.80 621.00V633.20" stroke="#111" stroke-width="1.2" fill="none"/>
<text x="354.72" y="633.00" font-size="21.0" font-style="italic" fill="#000">b</text>
<path d="M370.30 627.40H382.50M376.40 621.00V633.20" stroke="#111" stroke-width="1.2" fill="none"/>
<path d="M63.70 689.00C56.50 702.74 56.50 721.06 63.70 734.80" stroke="#000" stroke-width="1.6" fill="none"/>
<path d="M63.10 691.00C57.30 703.66 57.30 720.14 63.10 732.80" stroke="#000" stroke-width="1.0" fill="none"/>
<text x="65.76" y="716.00" font-size="21.0" font-style="italic" fill="#000">x</text>
<path d="M81.00 710.40H93.20M87.10 704.00V716.20" stroke="#111" stroke-width="1.2" fill="none"/>
<path d="M102.95 709.30L149.90 709.30" stroke="#000" stroke-width="1.25"/>
<text x="121.47" y="705.00" font-size="18.5" fill="#000">1</text>
<text x="104.29" y="730.00" font-size="18.5" fill="#000">2</text>
<path d="M114.50 724.00L117.10 722.60L120.80 729.80L130.60 713.80L146.50 713.80" stroke="#000" stroke-width="1.15" fill="none" stroke-linejoin="miter"/>
<path d="M116.90 722.80L120.80 729.60" stroke="#000" stroke-width="2" fill="none"/>
<text x="132.99" y="730.00" font-size="18.5" fill="#000">2</text>
<path d="M159.40 710.40H171.60M165.50 704.00V716.20" stroke="#111" stroke-width="1.2" fill="none"/>
<text x="177.22" y="716.00" font-size="21.0" font-style="italic" fill="#000">b</text>
<path d="M190.00 689.00C197.20 702.74 197.20 721.06 190.00 734.80" stroke="#000" stroke-width="1.6" fill="none"/>
<path d="M190.60 691.00C196.40 703.66 196.40 720.14 190.60 732.80" stroke="#000" stroke-width="1.0" fill="none"/>
<text x="199.19" y="707.40" font-size="18.5" fill="#000">2</text>
<path d="M214.00 710.40H226.20M220.10 704.00V716.20" stroke="#111" stroke-width="1.2" fill="none"/>
<path d="M240.40 689.00C233.20 702.74 233.20 721.06 240.40 734.80" stroke="#000" stroke-width="1.6" fill="none"/>
<path d="M239.80 691.00C234.00 703.66 234.00 720.14 239.80 732.80" stroke="#000" stroke-width="1.0" fill="none"/>
<text x="244.35" y="716.00" font-size="21.0" font-style="italic" fill="#000">y</text>
<path d="M257.80 710.40H270.00" stroke="#111" stroke-width="1.2" fill="none"/>
<path d="M279.70 709.30L326.60 709.30" stroke="#000" stroke-width="1.25"/>
<text x="298.31" y="705.00" font-size="18.5" fill="#000">3</text>
<text x="281.19" y="730.00" font-size="18.5" fill="#000">2</text>
<path d="M291.40 724.00L294.00 722.60L297.70 729.80L307.50 713.80L323.40 713.80" stroke="#000" stroke-width="1.15" fill="none" stroke-linejoin="miter"/>
<path d="M293.80 722.80L297.70 729.60" stroke="#000" stroke-width="2" fill="none"/>
<text x="310.19" y="730.00" font-size="18.5" fill="#000">2</text>
<path d="M336.70 710.40H348.90M342.80 704.00V716.20" stroke="#111" stroke-width="1.2" fill="none"/>
<text x="354.72" y="716.00" font-size="21.0" font-style="italic" fill="#000">b</text>
<path d="M370.30 710.40H382.50M376.40 704.00V716.20" stroke="#111" stroke-width="1.2" fill="none"/>
<path d="M63.70 855.00C56.50 868.74 56.50 887.06 63.70 900.80" stroke="#000" stroke-width="1.6" fill="none"/>
<path d="M63.10 857.00C57.30 869.66 57.30 886.14 63.10 898.80" stroke="#000" stroke-width="1.0" fill="none"/>
<text x="65.76" y="882.80" font-size="21.0" font-style="italic" fill="#000">x</text>
<path d="M81.00 877.20H93.20M87.10 870.80V883.00" stroke="#111" stroke-width="1.2" fill="none"/>
<path d="M102.95 875.30L149.90 875.30" stroke="#000" stroke-width="1.25"/>
<text x="121.47" y="871.80" font-size="18.5" fill="#000">1</text>
<text x="104.29" y="896.80" font-size="18.5" fill="#000">2</text>
<path d="M114.50 890.00L117.10 888.60L120.80 895.80L130.60 879.80L146.50 879.80" stroke="#000" stroke-width="1.15" fill="none" stroke-linejoin="miter"/>
<path d="M116.90 888.80L120.80 895.60" stroke="#000" stroke-width="2" fill="none"/>
<text x="132.99" y="896.80" font-size="18.5" fill="#000">2</text>
<path d="M159.40 877.20H171.60" stroke="#111" stroke-width="1.2" fill="none"/>
<text x="177.22" y="882.80" font-size="21.0" font-style="italic" fill="#000">b</text>
<path d="M190.00 855.00C197.20 868.74 197.20 887.06 190.00 900.80" stroke="#000" stroke-width="1.6" fill="none"/>
<path d="M190.60 857.00C196.40 869.66 196.40 886.14 190.60 898.80" stroke="#000" stroke-width="1.0" fill="none"/>
<text x="199.19" y="874.20" font-size="18.5" fill="#000">2</text>
<path d="M214.00 877.20H226.20M220.10 870.80V883.00" stroke="#111" stroke-width="1.2" fill="none"/>
<path d="M240.40 855.00C233.20 868.74 233.20 887.06 240.40 900.80" stroke="#000" stroke-width="1.6" fill="none"/>
<path d="M239.80 857.00C234.00 869.66 234.00 886.14 239.80 898.80" stroke="#000" stroke-width="1.0" fill="none"/>
<text x="244.35" y="882.80" font-size="21.0" font-style="italic" fill="#000">y</text>
<path d="M257.80 877.20H270.00M263.90 870.80V883.00" stroke="#111" stroke-width="1.2" fill="none"/>
<path d="M279.70 875.30L326.60 875.30" stroke="#000" stroke-width="1.25"/>
<text x="298.31" y="871.80" font-size="18.5" fill="#000">3</text>
<text x="281.19" y="896.80" font-size="18.5" fill="#000">2</text>
<path d="M291.40 890.00L294.00 888.60L297.70 895.80L307.50 879.80L323.40 879.80" stroke="#000" stroke-width="1.15" fill="none" stroke-linejoin="miter"/>
<path d="M293.80 888.80L297.70 895.60" stroke="#000" stroke-width="2" fill="none"/>
<text x="310.19" y="896.80" font-size="18.5" fill="#000">2</text>
<path d="M336.70 877.20H348.90" stroke="#111" stroke-width="1.2" fill="none"/>
<text x="354.72" y="882.80" font-size="21.0" font-style="italic" fill="#000">b</text>
<path d="M370.30 877.20H382.50" stroke="#111" stroke-width="1.2" fill="none"/>
<path d="M63.70 938.00C56.50 951.74 56.50 970.06 63.70 983.80" stroke="#000" stroke-width="1.6" fill="none"/>
<path d="M63.10 940.00C57.30 952.66 57.30 969.14 63.10 981.80" stroke="#000" stroke-width="1.0" fill="none"/>
<text x="65.76" y="965.80" font-size="21.0" font-style="italic" fill="#000">x</text>
<path d="M81.00 960.20H93.20" stroke="#111" stroke-width="1.2" fill="none"/>
<path d="M102.95 958.30L149.90 958.30" stroke="#000" stroke-width="1.25"/>
<text x="121.47" y="954.80" font-size="18.5" fill="#000">1</text>
<text x="104.29" y="979.80" font-size="18.5" fill="#000">2</text>
<path d="M114.50 973.00L117.10 971.60L120.80 978.80L130.60 962.80L146.50 962.80" stroke="#000" stroke-width="1.15" fill="none" stroke-linejoin="miter"/>
<path d="M116.90 971.80L120.80 978.60" stroke="#000" stroke-width="2" fill="none"/>
<text x="132.99" y="979.80" font-size="18.5" fill="#000">2</text>
<path d="M159.40 960.20H171.60" stroke="#111" stroke-width="1.2" fill="none"/>
<text x="177.22" y="965.80" font-size="21.0" font-style="italic" fill="#000">b</text>
<path d="M190.00 938.00C197.20 951.74 197.20 970.06 190.00 983.80" stroke="#000" stroke-width="1.6" fill="none"/>
<path d="M190.60 940.00C196.40 952.66 196.40 969.14 190.60 981.80" stroke="#000" stroke-width="1.0" fill="none"/>
<text x="199.19" y="957.20" font-size="18.5" fill="#000">2</text>
<path d="M214.00 960.20H226.20M220.10 953.80V966.00" stroke="#111" stroke-width="1.2" fill="none"/>
<path d="M240.40 938.00C233.20 951.74 233.20 970.06 240.40 983.80" stroke="#000" stroke-width="1.6" fill="none"/>
<path d="M239.80 940.00C234.00 952.66 234.00 969.14 239.80 981.80" stroke="#000" stroke-width="1.0" fill="none"/>
<text x="244.35" y="965.80" font-size="21.0" font-style="italic" fill="#000">y</text>
<path d="M257.80 960.20H270.00M263.90 953.80V966.00" stroke="#111" stroke-width="1.2" fill="none"/>
<path d="M279.70 958.30L326.60 958.30" stroke="#000" stroke-width="1.25"/>
<text x="298.31" y="954.80" font-size="18.5" fill="#000">3</text>
<text x="281.19" y="979.80" font-size="18.5" fill="#000">2</text>
<path d="M291.40 973.00L294.00 971.60L297.70 978.80L307.50 962.80L323.40 962.80" stroke="#000" stroke-width="1.15" fill="none" stroke-linejoin="miter"/>
<path d="M293.80 971.80L297.70 978.60" stroke="#000" stroke-width="2" fill="none"/>
<text x="310.19" y="979.80" font-size="18.5" fill="#000">2</text>
<path d="M336.70 960.20H348.90" stroke="#111" stroke-width="1.2" fill="none"/>
<text x="354.72" y="965.80" font-size="21.0" font-style="italic" fill="#000">b</text>
<path d="M370.30 960.20H382.50" stroke="#111" stroke-width="1.2" fill="none"/>
<path d="M68 1023.6H69.6M132.4 1023.6H134M176.2 1023.6H177.8" stroke="#000" stroke-opacity="0.55" stroke-width="1.2"/>
</g>
<rect x="5.6" y="977.9" width="76.9" height="40.4" rx="5" fill="#ededed" stroke="#d2d2d2" stroke-width="1"/>
<rect x="21.4" y="989" width="24.7" height="14.8" rx="2" fill="none" stroke="#606060" stroke-width="2"/>
<circle cx="25.7" cy="992.6" r="1.05" fill="#606060"/>
<circle cx="29.9" cy="992.6" r="1.05" fill="#606060"/>
<circle cx="34.0" cy="992.6" r="1.05" fill="#606060"/>
<circle cx="38.0" cy="992.6" r="1.05" fill="#606060"/>
<circle cx="42.0" cy="992.6" r="1.05" fill="#606060"/>
<circle cx="28.0" cy="996.7" r="1.05" fill="#606060"/>
<circle cx="32.1" cy="996.7" r="1.05" fill="#606060"/>
<circle cx="36.2" cy="996.7" r="1.05" fill="#606060"/>
<circle cx="40.3" cy="996.7" r="1.05" fill="#606060"/>
<path d="M29.4 1000.2H39.1" stroke="#606060" stroke-width="2" stroke-linecap="round"/>
<path d="M55.9 1002L62.05 995L68.2 1002Z" fill="#606060"/>
</svg>
<svg style="left:0;top:0" width="1280" height="46" viewBox="0 0 1280 46">
<rect x="0" y="0" width="1280" height="45" fill="#2a2a2a"/>
<rect x="0" y="45" width="1280" height="1" fill="#000"/>
<rect x="13" y="15.2" width="18.2" height="2.8" fill="#dcdcdc"/>
<rect x="13" y="21.6" width="18.2" height="2.8" fill="#dcdcdc"/>
<rect x="13" y="28.0" width="18.2" height="2.8" fill="#dcdcdc"/>
<text x="47" y="29" font-family="Liberation Sans" font-size="16" fill="#e3e3e3">SqueezeTheHearts2</text>
<path d="M203.9 19.3H215.6L209.75 25.4Z" fill="#e3e3e3"/>
<rect x="225" y="6.3" width="65" height="31.2" rx="3" fill="#2f72dc"/>
<text x="257.5" y="28" text-anchor="middle" font-family="Liberation Sans" font-size="15" fill="#fff">Save</text>
<circle cx="604.3" cy="25.35" r="6.9" stroke="#e8e8e8" stroke-width="2.9" fill="none" stroke-linecap="round"/>
<path d="M611.2 13.5V32.2" stroke="#e8e8e8" stroke-width="2.9" fill="none" stroke-linecap="round"/>
<path d="M616.40 25.35H630.20A6.9 6.9 0 1 0 627.74 30.64" stroke="#e8e8e8" stroke-width="2.9" fill="none" stroke-linecap="round"/>
<path d="M645.00 19.60C643.50 18.10 638.83 17.80 636.10 20.20C634.70 22.00 636.00 24.75 640.25 25.35C645.20 25.85 646.00 29.70 644.40 30.90C641.67 32.90 637.00 32.60 635.50 31.10" stroke="#e8e8e8" stroke-width="2.9" fill="none" stroke-linecap="round"/>
<path d="M650.2 32.2V23.2C650.2 20 652.0 18.4 654.7 18.4C657.5 18.4 659.3 20 659.3 23.2V32.2M659.3 23.2C659.3 20 661.0999999999999 18.4 663.8 18.4C666.6 18.4 668.4 20 668.4 23.2V32.2" stroke="#e8e8e8" stroke-width="2.9" fill="none" stroke-linecap="round" stroke-linejoin="round"/>
<circle cx="679.9" cy="25.35" r="7.2" stroke="#e8e8e8" stroke-width="2.9" fill="none" stroke-linecap="round"/>
<path d="M701.00 19.60C699.50 18.10 694.89 17.80 692.20 20.20C690.80 22.00 692.10 24.75 696.30 25.35C701.20 25.85 702.00 29.70 700.40 30.90C697.71 32.90 693.10 32.60 691.60 31.10" stroke="#e8e8e8" stroke-width="2.9" fill="none" stroke-linecap="round"/>
<text x="1092" y="29.6" font-family="Liberation Sans" font-size="16" fill="#e3e3e3">Lise</text>
<path d="M1130.2 21.9H1142.5L1136.35 28.1Z" fill="#e3e3e3"/>
<path d="M1181 16H1171.6C1170.6 16 1170 16.6 1170 17.6V28.6C1170 29.6 1170.6 30.2 1171.6 30.2H1183.6C1184.6 30.2 1185.2 29.6 1185.2 28.6V25.5" stroke="#e3e3e3" stroke-width="1.9" fill="none"/>
<path d="M1181.5 14.5L1187.8 20.1L1181.5 25.7V22.6C1177.5 22.4 1174.8 23.6 1172.8 26.8C1173.2 21.2 1176.6 18 1181.5 17.6Z" fill="#e3e3e3"/>
<circle cx="1218" cy="23" r="9" fill="#e3e3e3"/>
<text x="1218" y="28.6" text-anchor="middle" font-family="Liberation Sans" font-weight="bold" font-size="15.5" fill="#2a2a2a">?</text>
<circle cx="1258.1" cy="23" r="8.6" fill="none" stroke="#e3e3e3" stroke-width="1.8"/>
<path d="M1252.5 17.8C1254.2 16.2 1256 15.6 1257.2 15.6L1257.8 17.2L1259.6 17.6L1258.6 19.4L1256.4 19.6L1255.6 21.4L1257.6 22.6L1260.6 23L1262 25L1260.4 27.8L1258.8 30.6L1257.6 29.6L1257.2 26.4L1255 24.6L1253.8 22L1252.4 20.8Z" fill="#e3e3e3"/>
<path d="M1260.6 15.8L1263 17.2L1264.4 19.4L1262.4 19.8L1260.8 18Z" fill="#e3e3e3"/>
</svg>
</body></html>
